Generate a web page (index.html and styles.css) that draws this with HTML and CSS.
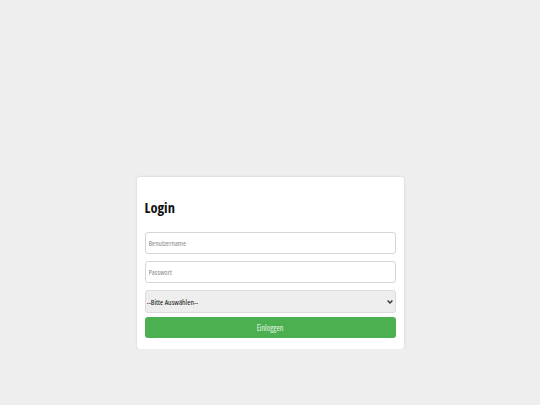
FILE: index.html
```html
<!DOCTYPE html>
<html lang="de">
<head>
<meta charset="utf-8">
<title>Login</title>
<link rel="stylesheet" href="styles.css">
</head>
<body>
<main class="page">
  <form class="card">
    <h1 class="title">Login</h1>
    <input class="field" type="text" placeholder="Benutzername">
    <input class="field field-pass" type="password" placeholder="Passwort">
    <div class="select-wrap">
      <select class="select">
        <option>--Bitte Auswählen--</option>
      </select>
      <svg class="chevron" width="6" height="4" viewBox="0 0 6 4" aria-hidden="true">
        <path d="M0.6 0.6 L3 3 L5.4 0.6" fill="none" stroke="#333" stroke-width="1.4"/>
      </svg>
    </div>
    <button class="btn" type="button">Einloggen</button>
  </form>
</main>
</body>
</html>
```

FILE: styles.css
```css
html, body {
  margin: 0;
  padding: 0;
  background: #eeeeee;
  font-family: "Open Sans", "Liberation Sans", Arial, sans-serif;
  font-stretch: 75%;
}
.page {
  display: flex;
  justify-content: center;
  padding-top: 177px;
}
.card {
  box-sizing: border-box;
  width: 267px;
  height: 172px;
  background: #ffffff;
  border-radius: 3px;
  box-shadow: 0 0 3px rgba(0,0,0,0.12);
  padding: 0 8px;
  display: flex;
  flex-direction: column;
}
.title {
  margin: 22px 0 0 0;
  height: 33px;
  font-size: 14.5px;
  line-height: 18px;
  font-weight: bold;
  font-stretch: 75%;
  color: #111;
}
.field {
  box-sizing: border-box;
  width: 100%;
  height: 22px;
  margin: 0;
  padding: 0 3px;
  border: 1px solid #d6d6d6;
  border-radius: 3px;
  font-family: inherit;
  font-stretch: 75%;
  font-size: 7.5px;
  color: #333;
  background: #fff;
  outline: none;
}
.field::placeholder { color: #8a8a8a; }
.field-pass { margin-top: 7px; }
.select-wrap {
  position: relative;
  margin-top: 7px;
}
.select {
  box-sizing: border-box;
  display: block;
  width: 100%;
  height: 23px;
  margin: 0;
  padding: 0 1px;
  border: 1px solid #dcdcdc;
  border-radius: 3px;
  background: #eeeeee;
  font-family: inherit;
  font-stretch: 75%;
  font-size: 7.8px;
  color: #111;
  appearance: none;
  -webkit-appearance: none;
}
.chevron {
  position: absolute;
  right: 3px;
  top: 10px;
  pointer-events: none;
}
.btn {
  box-sizing: border-box;
  width: 100%;
  height: 21px;
  margin-top: 4px;
  border: none;
  border-radius: 3px;
  background: #4caf50;
  color: #e8f5e8;
  font-family: inherit;
  font-stretch: 75%;
  font-size: 8px;
}
```
